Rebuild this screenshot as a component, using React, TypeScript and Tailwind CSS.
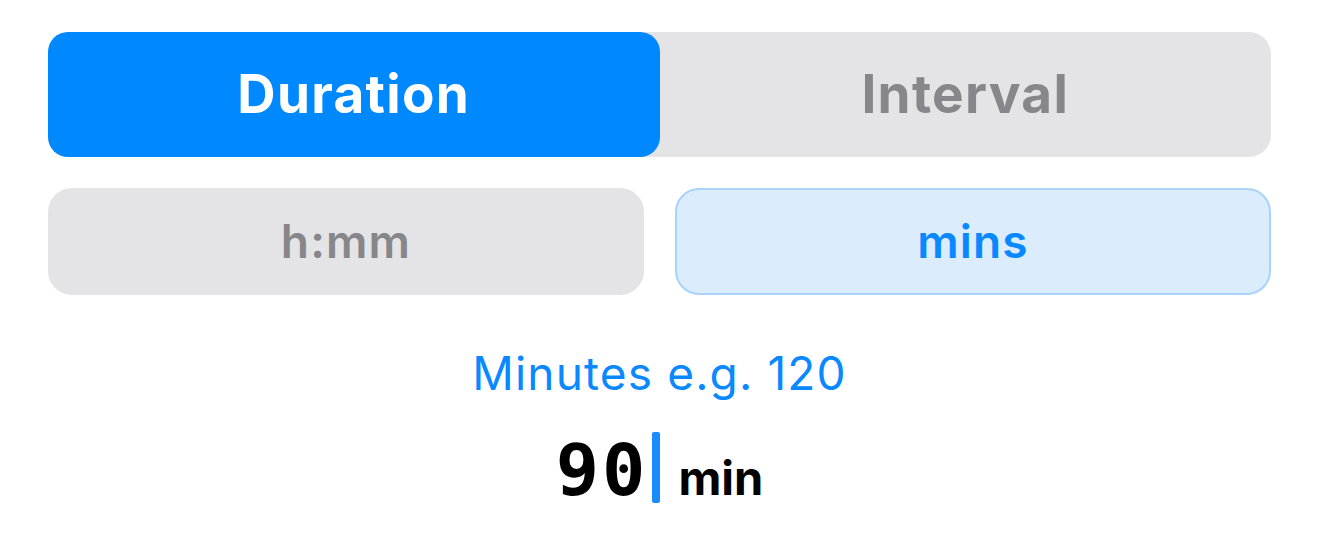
import { useState } from 'react';

export default function App() {
  const [mode, setMode] = useState<'duration' | 'interval'>('duration');
  const [unit, setUnit] = useState<'hmm' | 'mins'>('mins');

  return (
    <main className="w-full min-h-[545px] bg-white pt-8 pl-12 pr-[49px] font-['Inter','Noto_Sans',sans-serif]">
      {/* segmented control */}
      <div className="flex h-[125px] rounded-[22px] bg-[#e4e4e6]">
        <button
          onClick={() => setMode('duration')}
          className={`w-1/2 rounded-[20px] text-[53px] font-bold tracking-[0.025em] ${
            mode === 'duration' ? 'bg-[#0088ff] text-white' : 'text-[#86868b]'
          }`}
        >
          Duration
        </button>
        <button
          onClick={() => setMode('interval')}
          className={`w-1/2 rounded-[20px] text-[53px] font-bold tracking-[0.025em] ${
            mode === 'interval' ? 'bg-[#0088ff] text-white' : 'text-[#86868b]'
          }`}
        >
          Interval
        </button>
      </div>

      {/* unit toggle */}
      <div className="mt-[31px] grid grid-cols-2 gap-[31px]">
        <UnitButton label="h:mm" active={unit === 'hmm'} onClick={() => setUnit('hmm')} />
        <UnitButton label="mins" active={unit === 'mins'} onClick={() => setUnit('mins')} />
      </div>

      <p className="mt-[50px] text-center text-[46px] leading-[56px] tracking-[0.025em] text-[#0a88ff]">Minutes e.g. 120</p>

      <div className="mt-[23px] flex items-baseline justify-center">
        <span className="font-['DejaVu_Sans_Mono',monospace] text-[72px] font-bold leading-[72px] tracking-[3px] text-black">90</span>
        {/* caret */}
        <span className="ml-[4px] h-[71px] w-[8px] translate-y-[8px] rounded-[2px] bg-[#1a8cff]" />
        <span className="ml-[18px] text-[47px] font-bold leading-[48px] text-black">min</span>
      </div>
    </main>
  );
}

function UnitButton({ label, active, onClick }: any) {
  return (
    <button
      onClick={onClick}
      className={`h-[107px] rounded-[24px] border-2 text-[46px] font-semibold tracking-[0.025em] ${
        active
          ? 'border-[#a8d3fb] bg-[#dbecfd] text-[#0a88ff]'
          : 'border-[#e4e4e6] bg-[#e4e4e6] text-[#86868b]'
      }`}
    >
      {label}
    </button>
  );
}
